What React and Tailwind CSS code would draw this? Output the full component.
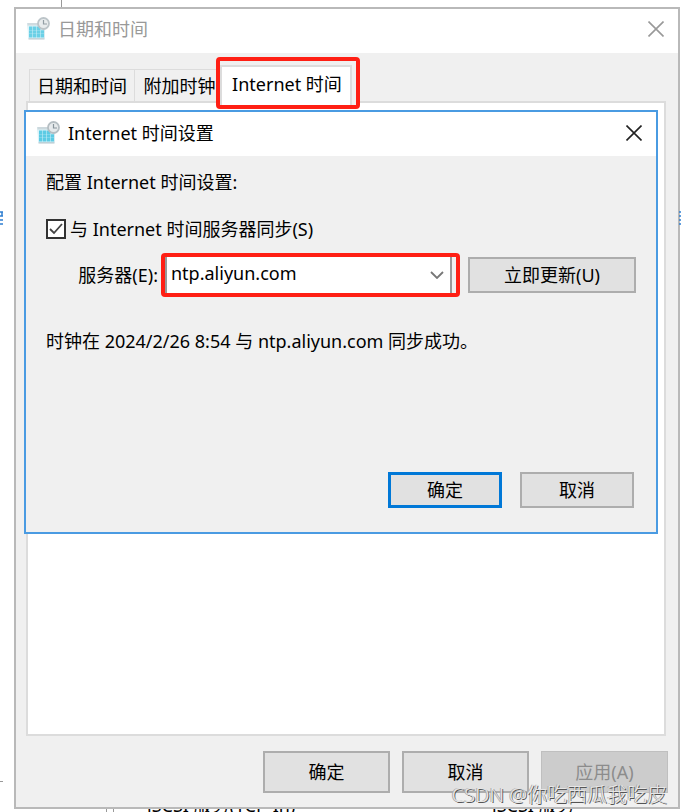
import React, { useState } from "react";

const buttonStyle = "border-2 border-[#adadad] bg-[#e1e1e1] text-center text-black";

function ClockIcon({ faded }) {
  return (
    <svg viewBox="0 0 24 24" className={faded ? "h-6 w-6 opacity-90" : "h-6 w-6"} aria-hidden="true">
      <path d="M1.500 6h17v16.500h-16z" fill="#b4c6cd" />
      <path d="M1.500 6h17v15.300h-16.500z" fill="#d9f3fa" />
      <path d="M1.500 6h17v2.500h-17z" fill="#ccd8dd" />
      <path
        d="M3 9.500h3.500v3.400H3zM7 9.500h3.500v3.400H7zM11 9.500h3.500v3.400H11zM3 13.300h3.500v3.400H3zM7 13.300h3.500v3.400H7zM11 13.300h3.500v3.400H11zM15 13.300h3v3.400h-3zM3 17.100h3.500v3.400H3zM7 17.100h3.500v3.400H7zM11 17.100h3.500v3.400H11zM15 17.100h3v3.400h-3z"
        fill="#5ccbe4"
      />
      <circle cx="17.500" cy="6.500" r="5.500" fill="#e6eaec" stroke="#b5bec3" strokeWidth="1.800" />
      <path d="M17.500 3v4H21" fill="none" stroke="#87949b" strokeWidth="1.200" />
    </svg>
  );
}

function CloseButton({ color }) {
  return (
    <button type="button" aria-label="关闭" className={color}>
      <svg viewBox="0 0 16 16" className="h-4 w-4" fill="none" stroke="currentColor" strokeWidth="1.600">
        <path d="M.5.5l15 15M15.500.5l-15 15" />
      </svg>
    </button>
  );
}

function Highlight() {
  return <span className="pointer-events-none absolute -inset-1 rounded-sm border-4 border-[#ff1f14]" />;
}

function TimeSettings() {
  const [sync, setSync] = useState(true);
  const [server, setServer] = useState("ntp.aliyun.com");

  return (
    <section
      role="dialog"
      aria-label="Internet 时间设置"
      className="absolute top-[7px] right-1.5 -left-1 border-2 border-[#4a9be2] bg-[#f0f0f0]"
    >
      <header className="flex h-11 items-center gap-2 bg-white pr-3.5 pb-0.5 pl-2.5">
        <ClockIcon />
        <h2 className="flex-1">Internet 时间设置</h2>
        <CloseButton color="text-[#222]" />
      </header>
      <div className="px-5 pt-3.5 pb-6">
        <p>配置 Internet 时间设置:</p>
        <label className="mt-[23px] flex items-center gap-1">
          <span className="relative flex">
            <input
              type="checkbox"
              checked={sync}
              onChange={(e) => setSync(e.target.checked)}
              className="h-5 w-5 appearance-none border-2 border-[#333] bg-white"
            />
            {sync && (
              <svg viewBox="0 0 20 20" className="pointer-events-none absolute inset-0" fill="none" stroke="#444" strokeWidth="1.800">
                <path d="M4 10l4 4 8-9" />
              </svg>
            )}
          </span>
          与 Internet 时间服务器同步(S)
        </label>
        <div className="mt-4 flex items-center">
          <label htmlFor="server" className="w-28 text-right">
            服务器(E):
          </label>
          <div className="relative ml-[7px] flex-1 pr-1">
            <select
              id="server"
              value={server}
              onChange={(e) => setServer(e.target.value)}
              className="block h-9 w-full appearance-none border-x-2 border-[#999] bg-white pb-1 pl-1"
            >
              <option>ntp.aliyun.com</option>
              <option>time.windows.com</option>
            </select>
            <svg viewBox="0 0 14 8" className="pointer-events-none absolute top-3.5 right-3 h-2 w-3.5" fill="none" stroke="#777" strokeWidth="1.800">
              <path d="M1 1l6 6 6-6" />
            </svg>
            <Highlight />
          </div>
          <button type="button" className={`${buttonStyle} ml-3 h-9 w-[168px]`}>
            立即更新(U)
          </button>
        </div>
        <p className="mt-9">时钟在 2024/2/26 8:54 与 ntp.aliyun.com 同步成功。</p>
        <div className="mt-[119px] mr-0.5 flex justify-end gap-[18px]">
          <button type="button" className="h-9 w-[114px] border-[3px] border-[#0078d7] bg-[#e1e1e1]">
            确定
          </button>
          <button type="button" className={`${buttonStyle} h-9 w-[114px]`}>
            取消
          </button>
        </div>
      </div>
    </section>
  );
}

export default function App() {
  return (
    <main className="relative overflow-hidden bg-white pt-[7px] pr-px pb-1 pl-3.5 font-['Noto_Sans','Noto_Sans_CJK_SC',sans-serif] text-[18px] leading-6 text-black">
      <span className="absolute top-0 left-[61px] h-2 w-px bg-[#999]" />
      <svg className="absolute top-[211px] left-0 h-3.5 w-[3px]" stroke="#2f7fd1" strokeWidth="1.500">
        <path d="M0 1h3M0 5h3M0 9h3M0 13h3M2 1v4" />
      </svg>
      <span className="absolute top-[781px] left-0 h-px w-[3px] bg-[#999]" />
      <div className="absolute bottom-0 left-[106px] h-6 w-2 border-x border-[#999]" />
      <span className="absolute -bottom-1 left-[147px]">iSCSI 服务(TCP-In)</span>
      <span className="absolute -bottom-1 left-[492px]">iSCSI 服务</span>

      <div role="dialog" aria-label="日期和时间" className="relative border-2 border-[#b9b9b9] bg-[#f0f0f0]">
        <header className="flex h-11 items-center gap-2 bg-white pr-3.5 pb-1 pl-2.5">
          <ClockIcon faded />
          <h1 className="flex-1 text-[#999]">日期和时间</h1>
          <CloseButton color="text-[#999]" />
        </header>

        <div className="px-2.5 pt-2 pb-3.5">
          <div role="tablist" className="flex items-end">
            <button type="button" role="tab" aria-selected="false" className="ml-[3px] h-8 w-[106px] border border-b-0 border-[#dcdcdc]">
              日期和时间
            </button>
            <button type="button" role="tab" aria-selected="false" className="h-8 w-[85px] border-t border-[#dcdcdc] pl-1 whitespace-nowrap">
              附加时钟
            </button>
            <div className="relative z-10 -mb-1 bg-[#f0f0f0] pt-1 pr-1">
              <button type="button" role="tab" aria-selected="true" className="h-10 w-[132px] border-2 border-b-0 border-[#dcdcdc] bg-white pb-1 pl-0.5 whitespace-nowrap">
                Internet 时间
              </button>
              <Highlight />
            </div>
          </div>

          <div role="tabpanel" className="relative mr-0.5 h-[635px] border-2 border-[#dcdcdc] bg-white">
            <TimeSettings />
          </div>

          <footer className="mt-[15px] flex justify-end gap-3">
            <button type="button" className={`${buttonStyle} h-[42px] w-[127px]`}>
              确定
            </button>
            <button type="button" className={`${buttonStyle} h-[42px] w-[127px]`}>
              取消
            </button>
            <button type="button" disabled className="h-[42px] w-[127px] border border-[#bfbfbf] bg-[#ccc] text-[#8c8c8c]">
              应用(A)
            </button>
          </footer>
        </div>
      </div>

      <svg className="absolute top-[211px] right-0 h-3.5 w-[3px]" stroke="#2f7fd1" strokeWidth="1.500">
        <path d="M1 1h2M1 5h2M1 9h2M1 13h2" />
      </svg>
      <p className="pointer-events-none absolute right-3.5 bottom-1.5 text-[20px] font-light whitespace-nowrap text-[#e6e6e6] [text-shadow:1px_1px_0_#555,-1px_0_0_#aaa]">
        CSDN @你吃西瓜我吃皮
      </p>
    </main>
  );
}
